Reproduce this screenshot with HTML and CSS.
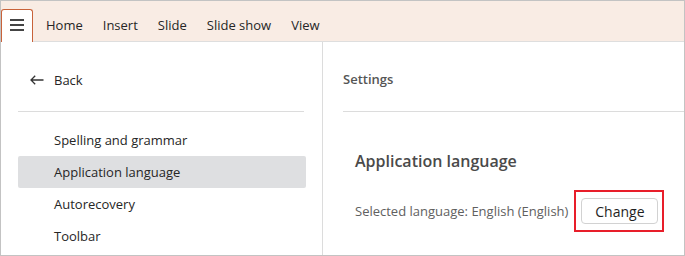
FILE: index.html
```html
<!DOCTYPE html>
<html lang="en">

<head>
    <meta charset="UTF-8">
    <meta name="viewport" content="width=device-width, initial-scale=1.0">
    <title>Settings - Application language</title>
    <link rel="stylesheet" href="styles.css">
</head>

<body>
    <div class="app">
        <div class="ribbon">
            <button class="menu-btn" aria-label="Menu">
                <svg width="14" height="12" viewBox="0 0 14 12">
                    <rect x="0" y="0" width="14" height="2" fill="#444"/>
                    <rect x="0" y="5" width="14" height="2" fill="#444"/>
                    <rect x="0" y="10" width="14" height="2" fill="#444"/>
                </svg>
            </button>
            <span class="tab">Home</span>
            <span class="tab">Insert</span>
            <span class="tab">Slide</span>
            <span class="tab">Slide show</span>
            <span class="tab">View</span>
        </div>
        <div class="main">
            <div class="sidebar">
                <div class="back">
                    <svg width="14" height="10" viewBox="0 0 14 10">
                        <path d="M13.5 5H1.2M5.2 0.8L1 5l4.2 4.2" fill="none" stroke="#333" stroke-width="1.3"/>
                    </svg>
                    <span>Back</span>
                </div>
                <div class="divider"></div>
                <div class="nav-item">Spelling and grammar</div>
                <div class="nav-item selected">Application language</div>
                <div class="nav-item">Autorecovery</div>
                <div class="nav-item">Toolbar</div>
            </div>
            <div class="content">
                <div class="content-title">Settings</div>
                <div class="divider"></div>
                <div class="section">
                    <h2>Application language</h2>
                    <div class="lang-row">
                        <span class="lang-text">Selected language: English (English)</span>
                        <div class="highlight">
                            <button class="change-btn">Change</button>
                        </div>
                    </div>
                </div>
            </div>
        </div>
    </div>
</body>

</html>
```

FILE: styles.css
```css
* {
    margin: 0;
    padding: 0;
    box-sizing: border-box;
}

body {
    font-family: "Open Sans", "Noto Sans", sans-serif;
    font-size: 13px;
    color: #262626;
}

.app {
    width: 685px;
    height: 256px;
    border: 1px solid #c3c3c3;
    display: flex;
    flex-direction: column;
    overflow: hidden;
}

.ribbon {
    height: 41px;
    background-color: #f9ece4;
    border-bottom: 1px solid #dedede;
    display: flex;
    align-items: flex-end;
}

.menu-btn {
    width: 32px;
    height: 33px;
    margin-bottom: -1px;
    margin-right: 3px;
    background: #fff;
    border: 1px solid #c8623a;
    border-bottom: none;
    border-radius: 3px 3px 0 0;
    display: flex;
    align-items: center;
    justify-content: center;
    padding-bottom: 2px;
}

.tab {
    align-self: stretch;
    display: flex;
    align-items: center;
    padding: 8px 10px 0;
    color: #262626;
}

.main {
    flex: 1;
    display: flex;
}

.sidebar {
    width: 322px;
    border-right: 1px solid #dcdcdc;
    padding: 0 16px 0 17px;
}

.back {
    height: 37px;
    margin-top: 19px;
    margin-bottom: 13px;
    display: flex;
    align-items: center;
    gap: 10px;
    padding-left: 12px;
}

.divider {
    height: 1px;
    background-color: #dcdcdc;
}

.sidebar .divider {
    margin-right: 2px;
    margin-bottom: 12px;
}

.nav-item {
    height: 32px;
    line-height: 33px;
    padding-left: 36px;
    border-radius: 2px;
}

.nav-item.selected {
    background-color: #dedfe1;
}

.content {
    flex: 1;
    padding-left: 20px;
}

.content-title {
    height: 37px;
    margin-top: 19px;
    margin-bottom: 13px;
    line-height: 37px;
    font-weight: 600;
    color: #555;
}

.section {
    padding-left: 12px;
}

.section h2 {
    margin-top: 37px;
    font-size: 16px;
    font-weight: 600;
    color: #4a4a4a;
    line-height: 24px;
}

.lang-row {
    margin-top: 17px;
    display: flex;
    align-items: center;
}

.lang-text {
    color: #606060;
}

.highlight {
    margin-left: 6px;
    border: 2px solid #e81e2a;
    padding: 6px 4px 6px 5px;
}

.change-btn {
    width: 77px;
    height: 26px;
    background: #fff;
    border: 1px solid #d2d2d2;
    border-radius: 4px;
    font-family: inherit;
    font-size: 14px;
    color: #1f1f1f;
}
```
